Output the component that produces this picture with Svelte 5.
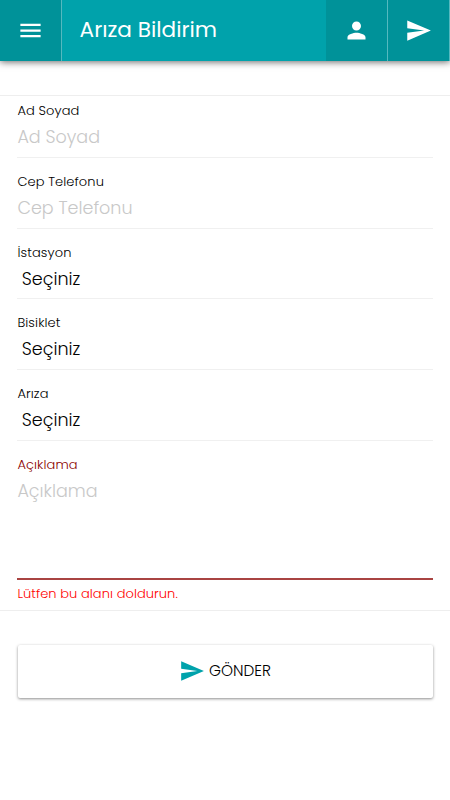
<script>
    let name = '';
    let phone = '';
    let description = '';

    const selects = [
        { id: 'station', label: 'İstasyon' },
        { id: 'bike', label: 'Bisiklet' },
        { id: 'fault', label: 'Arıza' }
    ];

    const sendPath = 'M2.01 21L23 12 2.01 3 2 10l15 2-15 2z';
</script>

<header>
    <button class="bar-button menu" aria-label="Menü">
        <svg viewBox="0 0 24 24"><path d="M3 18h18v-2H3v2zm0-5h18v-2H3v2zm0-7v2h18V6H3z" /></svg>
    </button>
    <h1>Arıza Bildirim</h1>
    <button class="bar-button" aria-label="Profil">
        <svg viewBox="0 0 24 24"><path d="M12 12c2.21 0 4-1.79 4-4s-1.79-4-4-4-4 1.79-4 4 1.79 4 4 4zm0 2c-2.67 0-8 1.34-8 4v2h16v-2c0-2.66-5.33-4-8-4z" /></svg>
    </button>
    <button class="bar-button" aria-label="Gönder">
        <svg viewBox="0 0 24 24"><path d={sendPath} /></svg>
    </button>
</header>

<main>
    <form>
        <div class="field">
            <label for="name">Ad Soyad</label>
            <input id="name" placeholder="Ad Soyad" bind:value={name} />
        </div>
        <div class="field">
            <label for="phone">Cep Telefonu</label>
            <input id="phone" placeholder="Cep Telefonu" bind:value={phone} />
        </div>
        {#each selects as item}
            <div class="field">
                <label for={item.id}>{item.label}</label>
                <select id={item.id}>
                    <option>Seçiniz</option>
                </select>
            </div>
        {/each}
        <div class="field invalid">
            <label for="description">Açıklama</label>
            <textarea id="description" placeholder="Açıklama" bind:value={description}></textarea>
        </div>
        <p class="error">Lütfen bu alanı doldurun.</p>
    </form>

    <button class="submit">
        <svg viewBox="0 0 24 24"><path d={sendPath} /></svg>
        <span>GÖNDER</span>
    </button>
</main>

<style>
    :global(body) {
        background: #fff;
        font-family: Poppins, Inter, sans-serif;
        font-weight: 300;
        color: #000;
    }

    header {
        position: relative;
        display: flex;
        height: 61px;
        background: #00a2ab;
        color: #fff;
        box-shadow: 0 1px 7px rgba(0, 0, 0, 0.6);
    }

    h1 {
        flex: 1;
        margin: 0;
        padding-left: 17.6px;
        font-size: 21.6px;
        font-weight: 400;
        line-height: 59px;
    }

    .bar-button {
        box-sizing: border-box;
        display: flex;
        align-items: center;
        justify-content: center;
        width: 62px;
        padding: 0;
        border: none;
        border-right: 1px solid #55b9bf;
        background: #009299;
        color: #fff;
    }

    .bar-button svg {
        width: 27px;
        height: 27px;
        fill: currentColor;
    }

    main {
        box-sizing: border-box;
        min-height: 705px;
        padding-top: 34px;
    }

    form {
        box-sizing: border-box;
        height: 516px;
        padding: 0 17.4px;
        border-top: 1px solid #eee;
        border-bottom: 1px solid #eee;
    }

    .field {
        box-sizing: border-box;
        height: 70.7px;
        padding-top: 14px;
        border-bottom: 1px solid #f0f0f0;
    }

    .field:first-child {
        height: 62px;
        padding-top: 5.3px;
    }

    label {
        display: block;
        height: 20px;
        font-size: 13px;
        line-height: 20px;
        letter-spacing: 0.1px;
    }

    input,
    select,
    textarea {
        display: block;
        box-sizing: border-box;
        width: 100%;
        height: 32px;
        margin: 0;
        padding: 0;
        border: none;
        outline: none;
        appearance: none;
        background: transparent;
        color: #000;
        font: inherit;
        font-size: 17.55px;
        line-height: 32px;
        resize: none;
    }

    select {
        padding-left: 4.4px;
    }

    textarea {
        height: 102px;
    }

    ::placeholder {
        color: #c8c8c8;
        opacity: 1;
    }

    .invalid {
        height: 139.5px;
        border-bottom: 2px solid #a94442;
    }

    .invalid label {
        color: #8b0000;
    }

    .error {
        margin: 4px 0 0;
        font-size: 13px;
        line-height: 20px;
        color: #f00;
        letter-spacing: 0.06px;
    }

    .submit {
        display: flex;
        align-items: center;
        justify-content: center;
        gap: 4px;
        width: 415px;
        height: 53px;
        margin: 34px auto 0;
        padding: 0 0 2px;
        border: none;
        border-radius: 2px;
        background: #fff;
        color: #000;
        font: inherit;
        font-size: 15.3px;
        box-shadow: 0 1px 3px rgba(0, 0, 0, 0.45);
    }

    .submit svg {
        width: 26px;
        height: 26px;
        fill: #00a2ab;
    }
</style>
